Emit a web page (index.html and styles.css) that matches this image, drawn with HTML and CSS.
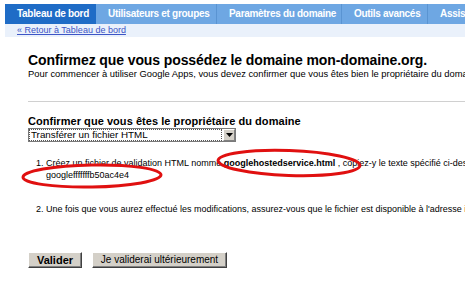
FILE: index.html
```html
<!DOCTYPE html>
<html lang="fr">
<head>
<meta charset="utf-8">
<title>Confirmez la propriété</title>
<link rel="stylesheet" href="styles.css">
</head>
<body>
<div class="nav">
  <div class="tabs">
    <div class="tab active t1">Tableau de bord</div>
    <div class="tab t2">Utilisateurs et groupes</div>
    <div class="tab t3">Paramètres du domaine</div>
    <div class="tab t4">Outils avancés</div>
    <div class="tab t5">Assistance</div>
  </div>
  <div class="subbar"><a href="#" class="back">« Retour à Tableau de bord</a></div>
</div>
<div class="content">
  <h1 class="title">Confirmez que vous possédez le domaine mon-domaine.org.</h1>
  <p class="intro">Pour commencer à utiliser Google Apps, vous devez confirmer que vous êtes bien le propriétaire du domaine.</p>
  <hr class="rule">
  <h2 class="subtitle">Confirmer que vous êtes le propriétaire du domaine</h2>
  <div class="select">
    <span class="select-text">Transférer un fichier HTML</span>
    <span class="select-btn"><svg width="7" height="4" viewBox="0 0 7 4"><path d="M0 0h7L3.5 4z" fill="#000"/></svg></span>
  </div>
  <ol class="steps">
    <li>Créez un fichier de validation HTML nommé <b>googlehostedservice.html</b> , copiez-y le texte spécifié ci-dessous.<br>googlefffffffb50ac4e4</li>
    <li>Une fois que vous aurez effectué les modifications, assurez-vous que le fichier est disponible à l'adresse indiquée.</li>
  </ol>
  <div class="buttons">
    <button class="btn primary">Valider</button>
    <button class="btn later">Je validerai ultérieurement</button>
  </div>
  <svg class="marks" width="465" height="281" viewBox="0 0 465 281">
    <ellipse cx="92" cy="176" rx="69" ry="11" fill="none" stroke="#e01010" stroke-width="3" transform="rotate(-1 92 176)"/>
    <ellipse cx="289" cy="163" rx="71" ry="12.5" fill="none" stroke="#e01010" stroke-width="3" transform="rotate(2 289 163)"/>
  </svg>
</div>
</body>
</html>
```
FILE: styles.css
```css
* { box-sizing: border-box; }
html, body { margin: 0; padding: 0; background: #fff; overflow: hidden; }
body { font-family: "Liberation Sans", Arial, sans-serif; color: #000; width: 465px; height: 281px; position: relative; }

.nav { padding: 4px 0 0 5px; }
.tabs { display: flex; height: 20px; background: #6ea7e3; white-space: nowrap; overflow: hidden; }
.tab { flex-shrink: 0; color: #fff; font-weight: bold; font-size: 10px; line-height: 20px; padding: 0 0 0 12px; border-right: 1px solid #5a94d2; letter-spacing: -0.3px; }
.tab.active { background: #1f6cc6; border-right-color: #1f6cc6; }
.t1 { width: 91px; }
.t2 { width: 121px; }
.t3 { width: 125px; }
.t4 { width: 86px; }
.t5 { width: 80px; border-right: 0; }
.subbar { height: 13px; background: #eaf1fb; padding-left: 12px; }
.back { font-size: 9px; line-height: 13px; color: #3d55c6; text-decoration: underline; display: block; }

.content { padding-left: 28px; white-space: nowrap; }
.title { margin: 15px 0 0; font-size: 14px; font-weight: bold; line-height: 16px; letter-spacing: -0.1px; }
.intro { margin: 0; font-size: 9.4px; line-height: 11px; }
.rule { margin: 22px 0 0; border: 0; border-top: 1px solid #d0d0d0; }
.subtitle { margin: 13px 0 0; font-size: 11px; font-weight: bold; line-height: 13px; letter-spacing: 0.05px; }
.select { width: 208px; height: 14px; border: 1px solid #7a7a7a; display: flex; align-items: center; justify-content: space-between; background: #fff; }
.select-text { font-size: 9.8px; line-height: 11px; padding-left: 2px; outline: 1px dotted #555; outline-offset: -1px; width: 193px; height: 12px; }
.select-btn { width: 12px; height: 12px; background: #d4d0c8; border: 1px solid; border-color: #fff #808080 #808080 #fff; display: flex; align-items: center; justify-content: center; }

.steps { margin: 15px 0 0; padding-left: 18px; font-size: 9px; line-height: 12px; }
.steps li { margin-bottom: 22px; }
.steps li:last-child { margin-bottom: 0; }
.steps b { font-weight: bold; }

.buttons { display: flex; gap: 10px; margin-top: 37px; }
.btn { font-family: "Liberation Sans", Arial, sans-serif; font-size: 10px; height: 16px; padding: 0; background: #d4d0c8; border: 1px solid; border-color: #fff #404040 #404040 #fff; box-shadow: inset -1px -1px 0 #808080; color: #000; line-height: 14px; }
.btn.primary { font-weight: bold; font-size: 11px; width: 54px; }
.btn.later { width: 135px; }

.marks { position: absolute; left: 0; top: 0; pointer-events: none; }
```
